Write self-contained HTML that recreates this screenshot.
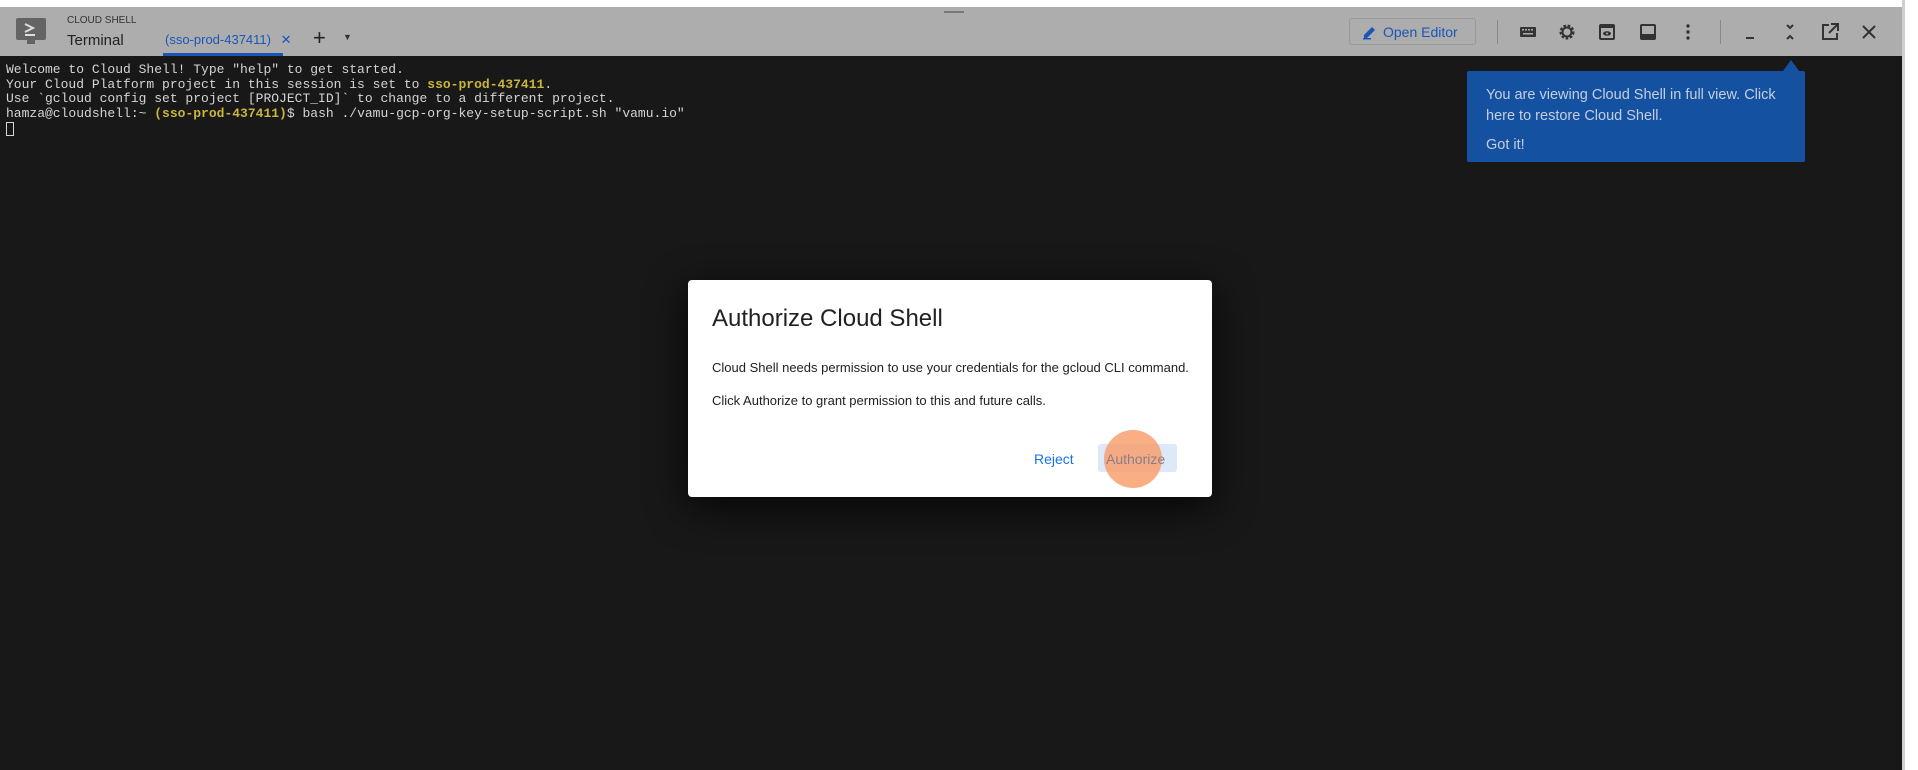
<!DOCTYPE html>
<html><head><meta charset="utf-8"><style>
*{margin:0;padding:0;box-sizing:border-box}
body{width:1918px;height:770px;overflow:hidden;background:#fff;font-family:"Liberation Sans",sans-serif;position:relative}
.abs{position:absolute}
#bar{left:0;top:7px;width:1902px;height:49px;background:#adadad}
#term{left:0;top:56px;width:1902px;height:714px;background:#181818}
#rs{left:1902px;top:0;width:16px;height:770px;background:#fff;border-left:3px solid #cfcfcf}
pre{font-family:"Liberation Mono",monospace;font-size:13px;line-height:14.7px;color:#d4d4d4;position:absolute;left:6px;top:63px}
.y{color:#c9b43c;font-weight:bold}
.ic{position:absolute;top:22px;width:20px;height:20px}
</style></head><body>
<div class="abs" id="bar"></div>
<div class="abs" style="left:944px;top:11px;width:20px;height:2px;background:#777"></div>
<div class="abs" id="term"></div>
<div class="abs" id="rs"></div>
<!-- logo -->
<svg class="abs" style="left:15px;top:17px" width="32" height="30" viewBox="0 0 32 30"><rect x="1" y="1" width="30" height="22" rx="2" fill="#646464"/><rect x="12" y="23" width="8" height="4" fill="#646464"/><path d="M10 7l8 4-8 4" stroke="#ddd" stroke-width="2" fill="none"/><rect x="10" y="17" width="10" height="2" fill="#ddd"/></svg>
<div class="abs" style="left:67px;top:15px;font-size:10px;color:#333">CLOUD SHELL</div>
<div class="abs" style="left:67px;top:32px;font-size:15px;color:#202124">Terminal</div>
<div class="abs" style="left:165px;top:32px;font-size:13px;color:#1a56b8">(sso-prod-437411) <span style="margin-left:6px">✕</span></div>
<div class="abs" style="left:163px;top:53px;width:120px;height:3px;background:#1a56b8"></div>
<div class="abs" style="left:313px;top:25px;font-size:22px;color:#222">+</div>
<div class="abs" style="left:343px;top:32px;font-size:9px;color:#333">▼</div>
<!-- right toolbar -->
<div class="abs" style="left:1349px;top:18px;width:127px;height:27px;border:1px solid #999;border-radius:3px;color:#1a56b8;font-size:14px;padding:5px 0 0 33px">Open Editor</div>
<svg class="abs" style="left:1362px;top:24px" width="16" height="16" viewBox="0 0 16 16"><path d="M2 11l8-8 3 3-8 8H2z" fill="#1a56b8"/><rect x="1" y="14" width="8" height="1.5" fill="#1a56b8"/></svg>
<div class="abs" style="left:1497px;top:20px;width:1px;height:24px;background:#888"></div>
<div class="abs" style="left:1720px;top:20px;width:1px;height:24px;background:#888"></div>
<svg class="ic" style="left:1518px" viewBox="0 0 20 20"><rect x="2" y="5" width="16" height="10" rx="1" fill="#333"/><g fill="#adadad"><rect x="4" y="7" width="2" height="1.5"/><rect x="7" y="7" width="2" height="1.5"/><rect x="10" y="7" width="2" height="1.5"/><rect x="13" y="7" width="2" height="1.5"/><rect x="5" y="11" width="10" height="1.5"/></g></svg>
<svg class="ic" style="left:1557px" viewBox="0 0 20 20"><circle cx="10" cy="10" r="6" fill="none" stroke="#333" stroke-width="3" stroke-dasharray="2.5 1.6"/><circle cx="10" cy="10" r="4.5" fill="none" stroke="#333" stroke-width="2"/></svg>
<svg class="ic" style="left:1597px" viewBox="0 0 20 20"><rect x="3" y="3" width="14" height="14" rx="1" fill="none" stroke="#333" stroke-width="2"/><rect x="3" y="3" width="14" height="3" fill="#333"/><ellipse cx="10" cy="11.5" rx="4" ry="2.3" fill="#333"/><circle cx="10" cy="11.5" r="1" fill="#adadad"/></svg>
<svg class="ic" style="left:1638px" viewBox="0 0 20 20"><rect x="3" y="3" width="14" height="14" rx="1" fill="none" stroke="#333" stroke-width="2"/><rect x="3" y="12" width="14" height="5" fill="#333"/></svg>
<svg class="ic" style="left:1678px" viewBox="0 0 20 20"><circle cx="10" cy="4" r="1.7" fill="#333"/><circle cx="10" cy="10" r="1.7" fill="#333"/><circle cx="10" cy="16" r="1.7" fill="#333"/></svg>
<svg class="ic" style="left:1740px" viewBox="0 0 20 20"><rect x="6" y="15" width="8" height="2" fill="#333"/></svg>
<svg class="ic" style="left:1780px" viewBox="0 0 20 20"><path d="M7 3l3 3 3-3M7 17l3-3 3 3" stroke="#333" stroke-width="2" fill="none"/></svg>
<svg class="ic" style="left:1820px" viewBox="0 0 20 20"><path d="M9 3H3v14h14v-6" stroke="#333" stroke-width="2" fill="none"/><path d="M11 2h7v7M18 2L9 11" stroke="#333" stroke-width="2" fill="none"/></svg>
<svg class="ic" style="left:1859px" viewBox="0 0 20 20"><path d="M4 4l12 12M16 4L4 16" stroke="#333" stroke-width="2"/></svg>
<pre>Welcome to Cloud Shell! Type "help" to get started.
Your Cloud Platform project in this session is set to <span class="y">sso-prod-437411</span>.
Use `gcloud config set project [PROJECT_ID]` to change to a different project.
hamza@cloudshell:~ <span class="y">(sso-prod-437411)</span>$ bash ./vamu-gcp-org-key-setup-script.sh "vamu.io"
<span style="display:inline-block;width:8px;height:14px;border:1px solid #d4d4d4;vertical-align:middle"></span></pre>
<!-- tooltip -->
<div class="abs" style="left:1783px;top:60px;width:0;height:0;border-left:8px solid transparent;border-right:8px solid transparent;border-bottom:11px solid #1551a1"></div>
<div class="abs" style="left:1467px;top:71px;width:338px;height:91px;background:#1551a1;border-radius:2px;color:#c5cede;font-size:14.5px;line-height:21px;padding:14px 19px">You are viewing Cloud Shell in full view. Click here to restore Cloud Shell.<div style="margin-top:8px">Got it!</div></div>
<!-- dialog -->
<div class="abs" style="left:688px;top:280px;width:524px;height:217px;background:#fff;border-radius:4px;box-shadow:0 10px 40px rgba(0,0,0,.8)">
<div class="abs" style="left:24px;top:25px;font-size:24px;color:#202124">Authorize Cloud Shell</div>
<div class="abs" style="left:24px;top:80px;font-size:13px;color:#202124">Cloud Shell needs permission to use your credentials for the gcloud CLI command.</div>
<div class="abs" style="left:24px;top:113px;font-size:13px;color:#202124">Click Authorize to grant permission to this and future calls.</div>
<div class="abs" style="left:346px;top:171px;font-size:14px;color:#1a73e8">Reject</div>
<div class="abs" style="left:410px;top:164px;width:79px;height:28px;background:#dde8f8;border-radius:3px"></div>
<div class="abs" style="left:416px;top:150px;width:58px;height:58px;border-radius:50%;background:rgba(248,160,110,.85)"></div>
<div class="abs" style="left:418px;top:171px;font-size:14px;color:#8a7d88">Authorize</div>
</div>
</body></html>
